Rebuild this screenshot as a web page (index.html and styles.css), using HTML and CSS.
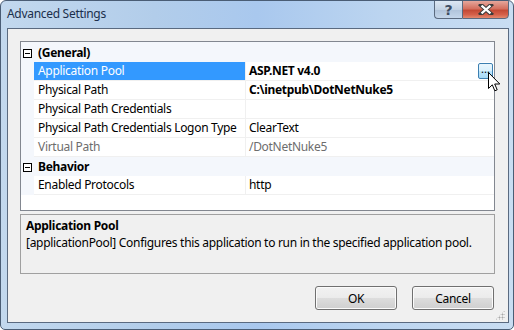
FILE: index.html
```html
<!DOCTYPE html>
<html lang="en">
  <head>
    <meta charset="UTF-8" />
    <title>Advanced Settings</title>
    <link rel="stylesheet" href="styles.css">
  </head>
  <body>
    <div class="window">
      <header class="titlebar">
        <span class="title">Advanced Settings</span>
        <div class="captionButtons">
          <span class="help">?</span>
          <span class="close">
            <svg width="16" height="11" viewBox="0 0 16 11">
              <path d="M3 1 L13 10 M13 1 L3 10" stroke="#3b3b3b" stroke-width="4.2" stroke-linecap="square" />
              <path d="M3.5 1.6 L12.5 9.4 M12.5 1.6 L3.5 9.4" stroke="#fff" stroke-width="2.2" />
            </svg>
          </span>
        </div>
      </header>

      <main class="client">
        <section class="grid">
          <div class="category first"><span class="toggle"></span>(General)</div>
          <div class="row selected">
            <span class="margin"></span>
            <span class="name">Application Pool</span>
            <span class="value bold">ASP.NET v4.0<span class="ellipsis">...</span></span>
          </div>
          <div class="row">
            <span class="margin"></span>
            <span class="name">Physical Path</span>
            <span class="value bold">C:\inetpub\DotNetNuke5</span>
          </div>
          <div class="row">
            <span class="margin"></span>
            <span class="name">Physical Path Credentials</span>
            <span class="value"></span>
          </div>
          <div class="row">
            <span class="margin"></span>
            <span class="name">Physical Path Credentials Logon Type</span>
            <span class="value">ClearText</span>
          </div>
          <div class="row readonly">
            <span class="margin"></span>
            <span class="name">Virtual Path</span>
            <span class="value">/DotNetNuke5</span>
          </div>
          <div class="category"><span class="toggle"></span>Behavior</div>
          <div class="row">
            <span class="margin"></span>
            <span class="name">Enabled Protocols</span>
            <span class="value">http</span>
          </div>
          <div class="filler"></div>
        </section>

        <section class="description">
          <h2>Application Pool</h2>
          <p>[applicationPool] Configures this application to run in the specified application pool.</p>
        </section>

        <footer class="buttons">
          <button>OK</button>
          <button>Cancel</button>
        </footer>
        <span class="grip"></span>
      </main>

      <svg class="cursor" width="13" height="21" viewBox="0 0 13 21">
        <path d="M0.5 0.5 L0.5 16.5 L4.3 12.8 L6.8 18.8 L9.2 17.8 L6.7 12 L11.8 12 Z" fill="#fff" stroke="#000" stroke-width="1" stroke-linejoin="miter" />
      </svg>
    </div>
  </body>
</html>
```

FILE: styles.css
```css
* {
  box-sizing: border-box;
}

body {
  margin: 0;
  background: #fff;
  font-family: "Segoe UI", "Noto Sans", "Open Sans", sans-serif;
  font-size: 12px;
  letter-spacing: -0.3px;
  color: #000;
}

.window {
  position: relative;
  width: 514px;
  height: 330px;
  border: 1px solid #4a5d75;
  border-radius: 6px 6px 5px 5px;
  background: linear-gradient(90deg, #c2d8ee 0%, #b2cdea 30%, #a9c8ee 50%, #bcd5f0 75%, #c9ddf2 100%);
  display: flex;
  flex-direction: column;
  padding: 0 4px 6px 6px;
  overflow: hidden;
}

.titlebar {
  height: 27px;
  display: flex;
  justify-content: space-between;
  align-items: flex-start;
}

.title {
  margin-top: 5px;
  color: #1b2f4c;
  line-height: 16px;
}

.captionButtons {
  display: flex;
  margin-top: -1px;
}

.captionButtons span {
  height: 19px;
  display: flex;
  align-items: center;
  justify-content: center;
  border: 1px solid #5b6a7f;
}

.help {
  width: 28px;
  border-radius: 0 0 0 4px;
  border-right: none !important;
  background: linear-gradient(#dce7f3, #c4d3e4 50%, #b0c3da 51%, #c4d6ea);
  color: #3e4d62;
  font-weight: bold;
  font-size: 14px;
  font-family: "DejaVu Sans", sans-serif;
  letter-spacing: 0;
}

.close {
  width: 47px;
  border-radius: 0 0 4px 0;
  background: linear-gradient(#e5a79c, #d4705f 45%, #c44a36 55%, #d5604a 80%, #e3896f);
}

.client {
  position: relative;
  flex: 1;
  background: #f0f0f0;
  border: 1px solid #5a6a80;
  padding: 12px 13px 0 12px;
  display: flex;
  flex-direction: column;
}

.grid {
  border: 1px solid #828790;
  background: #fff;
  height: 170px;
}

.category {
  height: 19px;
  background: #f4f7fc;
  font-weight: bold;
  display: flex;
  align-items: center;
  padding-left: 17px;
  position: relative;
}

.category.first {
  height: 20px;
  padding-top: 1px;
}

.toggle {
  position: absolute;
  left: 2px;
  top: 50%;
  margin-top: -4px;
  width: 9px;
  height: 9px;
  border: 1px solid #000;
  background: #fff;
}

.toggle::after {
  content: "";
  position: absolute;
  left: 1px;
  top: 3px;
  width: 5px;
  height: 1px;
  background: #000;
}

.first .toggle {
  margin-top: -3px;
}

.row {
  display: grid;
  grid-template-columns: 13px 212px 1fr;
  height: 19px;
}

.row .margin {
  background: #f4f7fc;
}

.row .name,
.row .value {
  border-bottom: 1px solid #f0f0f0;
  line-height: 18px;
  white-space: nowrap;
  padding-left: 4px;
}

.row .name {
  border-right: 1px solid #f0f0f0;
}

.row .value {
  padding-left: 3px;
  position: relative;
}

.bold {
  font-weight: bold;
}

.selected .name {
  background: #3399ff;
  color: #fff;
}

.readonly .name,
.readonly .value {
  color: #6d6d6d;
}

.ellipsis {
  position: absolute;
  right: 1px;
  top: 1px;
  width: 15px;
  height: 16px;
  border: 1px solid #3c7fb1;
  border-radius: 2px;
  background: linear-gradient(#eaf6fd, #d9f0fc 50%, #bee6fd 51%, #a7d9f5);
  font-weight: normal;
  line-height: 9px;
  text-align: center;
  font-size: 11px;
  letter-spacing: 0;
}

.description {
  margin-top: 3px;
  height: 60px;
  border: 1px solid #a0a0a0;
  padding: 2px 5px;
}

.description h2 {
  margin: 0;
  font-size: 12px;
  line-height: 17px;
}

.description p {
  margin: 0;
  line-height: 17px;
}

.buttons {
  display: flex;
  justify-content: flex-end;
  gap: 15px;
  margin-top: 12px;
  padding-right: 1px;
}

.buttons button {
  width: 82px;
  height: 24px;
  font-family: inherit;
  font-size: 12px;
  letter-spacing: inherit;
  color: #000;
  border: 1px solid #707070;
  border-radius: 3px;
  background: linear-gradient(#f2f2f2, #ebebeb 50%, #dddddd 51%, #cfcfcf);
  box-shadow: inset 0 0 0 1px #fbfbfb;
}

.grip {
  position: absolute;
  right: 3px;
  bottom: 2px;
  width: 10px;
  height: 10px;
  background:
    radial-gradient(circle, #a8a8a8 0.9px, transparent 1.1px) 0 0 / 3px 3px;
  clip-path: polygon(100% 0, 100% 100%, 0 100%);
}

.cursor {
  position: absolute;
  left: 487px;
  top: 71px;
}
```
